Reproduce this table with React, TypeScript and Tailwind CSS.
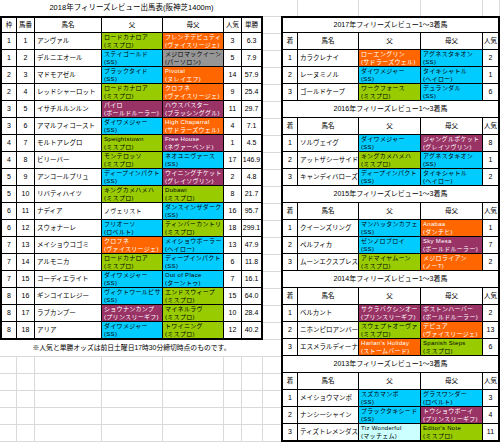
type Tone = "G" | "B" | "O" | "P" | "Y" | "C" | "W";

const tone: Record<Tone, string> = {
  G: "bg-[#99cc00] text-black",
  B: "bg-[#00ccff] text-black",
  O: "bg-[#ff6600] text-white",
  P: "bg-[#993366] text-white",
  Y: "bg-[#969696] text-black",
  C: "bg-[#ccffff] text-black",
  W: "bg-white text-black",
};

type Blood = [string, string, Tone];

const entries: [number, number, string, Blood, Blood, number, string][] = [
  [1, 1, "アンヴァル", ["ロードカナロア", "(ミスプロ)", "G"], ["フレンチデピュティ", "(ヴァイスリージェ)", "O"], 3, "6.3"],
  [1, 2, "デルニエオール", ["ステイゴールド", "(SS)", "B"], ["メジロマックイーン", "(パーソロン)", "Y"], 5, "7.9"],
  [2, 3, "マドモアゼル", ["ブラックタイド", "(SS)", "B"], ["Pivotal", "(ヌレイエフ)", "O"], 14, "57.9"],
  [2, 4, "レッドシャーロット", ["ロードカナロア", "(ミスプロ)", "G"], ["クロフネ", "(ヴァイスリージェ)", "O"], 9, "25.4"],
  [3, 5, "イサチルルンルン", ["パイロ", "(ボールドルーラー)", "P"], ["ハウスバスター", "(ブラッシンググル)", "P"], 11, "29.7"],
  [3, 6, "アマルフィコースト", ["ダイワメジャー", "(SS)", "B"], ["High Chaparral", "(サドラーズウェル)", "O"], 4, "7.1"],
  [4, 7, "モルトアレグロ", ["Speightstown", "(ミスプロ)", "G"], ["Free House", "(ネヴァーベンド)", "P"], 1, "4.5"],
  [4, 8, "ビリーバー", ["モンテロッソ", "(ミスプロ)", "G"], ["ネオユニヴァース", "(SS)", "B"], 17, "146.9"],
  [5, 9, "アンコールプリュ", ["ディープインパクト", "(SS)", "B"], ["ウイニングチケット", "(グレイソヴリン)", "P"], 2, "4.8"],
  [5, 10, "リバティハイツ", ["キングカメハメハ", "(ミスプロ)", "G"], ["Dubawi", "(ミスプロ)", "G"], 8, "21.7"],
  [6, 11, "ナディア", ["ノヴェリスト", "", "W"], ["ダンスインザダーク", "(SS)", "B"], 16, "95.7"],
  [6, 12, "スウォナーレ", ["フリオーソ", "(ロベルト)", "B"], ["ティンバーカントリ", "(ミスプロ)", "G"], 18, "299.1"],
  [7, 13, "メイショウコゴミ", ["クロフネ", "(ヴァイスリージェ)", "O"], ["メイショウボーラー", "(ヘイロー)", "B"], 13, "47.9"],
  [7, 14, "アルモニカ", ["ロードカナロア", "(ミスプロ)", "G"], ["ディープインパクト", "(SS)", "B"], 6, "11.8"],
  [7, 15, "コーディエライト", ["ダイワメジャー", "(SS)", "B"], ["Out of Place", "(ターントゥ)", "B"], 7, "16.1"],
  [8, 16, "ギンコイエレジー", ["ヴィクトワールピサ", "(SS)", "B"], ["エンドスウィープ", "(ミスプロ)", "G"], 15, "64.0"],
  [8, 17, "ラブカンプー", ["ショウナンカンプ", "(プリンスリーギフ)", "P"], ["マイネルラヴ", "(ミスプロ)", "G"], 10, "28.4"],
  [8, 18, "アリア", ["ダイワメジャー", "(SS)", "B"], ["トワイニング", "(ミスプロ)", "G"], 12, "40.2"],
];

const past: { year: number; rows: [number, string, Blood, Blood, number][] }[] = [
  {
    year: 2017,
    rows: [
      [1, "カラクレナイ", ["ローエングリン", "(サドラーズウェル)", "O"], ["アグネスタキオン", "(SS)", "B"], 2],
      [2, "レーヌミノル", ["ダイワメジャー", "(SS)", "B"], ["タイキシャトル", "(ヘイロー)", "B"], 1],
      [3, "ゴールドケープ", ["ワークフォース", "(ミスプロ)", "G"], ["デュランダル", "(SS)", "B"], 6],
    ],
  },
  {
    year: 2016,
    rows: [
      [1, "ソルヴェイグ", ["ダイワメジャー", "(SS)", "B"], ["ジャングルポケット", "(グレイソヴリン)", "P"], 8],
      [2, "アットザシーサイド", ["キングカメハメハ", "(ミスプロ)", "G"], ["アグネスタキオン", "(SS)", "B"], 1],
      [3, "キャンディバローズ", ["ディープインパクト", "(SS)", "B"], ["タイキシャトル", "(ヘイロー)", "B"], 2],
    ],
  },
  {
    year: 2015,
    rows: [
      [1, "クイーンズリング", ["マンハッタンカフェ", "(SS)", "B"], ["Anabaa", "(ダンチヒ)", "O"], 1],
      [2, "ペルフィカ", ["ゼンノロブロイ", "(SS)", "B"], ["Sky Mesa", "(ボールドルーラー)", "P"], 7],
      [3, "ムーンエクスプレス", ["アドマイヤムーン", "(ミスプロ)", "G"], ["メジロライアン", "(ノーT)", "O"], 2],
    ],
  },
  {
    year: 2014,
    rows: [
      [1, "ベルカント", ["サクラバクシンオー", "(プリンスリーギフ)", "P"], ["ボストンハーバー", "(ボールドルーラー)", "P"], 2],
      [2, "ニホンピロアンバー", ["スウェプトオーヴァ", "(ミスプロ)", "G"], ["デピュア", "(ヴァイスリージェ)", "O"], 13],
      [3, "エスメラルディーナ", ["Harlan's Holiday", "(ストームバード)", "O"], ["Spanish Steps", "(ミスプロ)", "G"], 6],
    ],
  },
  {
    year: 2013,
    rows: [
      [1, "メイショウマンボ", ["スズカマンボ", "(SS)", "B"], ["グラスワンダー", "(ロベルト)", "B"], 3],
      [2, "ナンシーシャイン", ["ブラックタキシード", "(SS)", "B"], ["トウショウボーイ", "(プリンスリーギフ)", "P"], 4],
      [3, "ティズトレメンダス", ["Tiz Wonderful", "(マッチェム)", "C"], ["Editor's Note", "(ミスプロ)", "G"], 11],
    ],
  },
];

const leftCols = "grid grid-cols-[15px_18px_67px_61px_61px_18px_19px]";
const rightCols = "grid grid-cols-[15px_61px_62px_62px_15px]";

function BloodCell({ b }: { b: Blood }) {
  const [name, line, t] = b;
  return (
    <div className={`${tone[t]} flex flex-col justify-center overflow-hidden whitespace-nowrap border-r border-black pl-[2px] text-[6px] leading-[8px] tracking-[0.3px]`}>
      <span>{name}</span>
      {line && <span>{line}</span>}
    </div>
  );
}

function Num({ v, last }: { v: string | number; last?: boolean }) {
  return (
    <div className={`flex items-center justify-center text-[7px] ${last ? "" : "border-r border-black"}`}>{v}</div>
  );
}

function Head({ label, last }: { label: string; last?: boolean }) {
  return (
    <div className={`flex items-center justify-center text-[6.5px] ${last ? "" : "border-r border-black"}`}>{label}</div>
  );
}

function GridRow({ widths, h = "h-[17px]" }: { widths: string[]; h?: string }) {
  return (
    <div className={`flex ${h} border-b border-[#d9d9d9]`}>
      {widths.map((w, i) => (
        <div key={i} className={`${w} shrink-0 border-r border-[#d9d9d9]`} />
      ))}
    </div>
  );
}

export default function App() {
  const leftWidths = ["w-[17px]", "w-[18px]", "w-[67px]", "w-[61px]", "w-[61px]", "w-[18px]", "w-[21px]"];
  const rightWidths = ["w-[17px]", "w-[61px]", "w-[62px]", "w-[62px]", "w-[17px]"];

  return (
    <div className="flex h-[442px] w-[500px] overflow-hidden bg-white text-black font-['Liberation_Sans','Noto_Sans_CJK_JP',sans-serif]">
      {/* left: 2018 entries */}
      <div className="flex w-[263px] shrink-0 flex-col">
        <div className="flex h-[16px] items-center justify-center text-[7.5px]">
          2018年フィリーズレビュー出馬表(阪神芝1400m)
        </div>
        <div className="border-2 border-black">
          <div className={`${leftCols} h-[15px] border-b border-black`}>
            <Head label="枠" />
            <Head label="馬番" />
            <Head label="馬名" />
            <Head label="父" />
            <Head label="母父" />
            <Head label="人気" />
            <Head label="単勝" last />
          </div>
          {entries.map(([waku, ban, name, sire, dam, pop, odds], i) => (
            <div
              key={ban}
              className={`${leftCols} ${i === entries.length - 1 ? "h-[16px]" : "h-[17px] border-b border-black"}`}
            >
              <Num v={waku} />
              <Num v={ban} />
              <div className="flex items-center overflow-hidden whitespace-nowrap border-r border-black pl-[2px] text-[6.5px]">
                {name}
              </div>
              <BloodCell b={sire} />
              <BloodCell b={dam} />
              <Num v={pop} />
              <Num v={odds} last />
            </div>
          ))}
        </div>
        <div className="flex h-[17px] items-center justify-center border-b border-[#d9d9d9] text-[6.8px]">
          ※人気と単勝オッズは前日土曜日17時30分締切時点のものです。
        </div>
        {[0, 1, 2, 3, 4].map((k) => (
          <GridRow key={k} widths={leftWidths} />
        ))}
      </div>

      {/* gap column */}
      <div className="flex w-[18px] shrink-0 flex-col">
        {Array.from({ length: 26 }).map((_, k) => (
          <div key={k} className="h-[17px] shrink-0 border-b border-[#d9d9d9]" />
        ))}
      </div>

      {/* right: past results */}
      <div className="flex w-[219px] shrink-0 flex-col">
        <div className="flex h-[16px]">
          {rightWidths.map((w, i) => (
            <div key={i} className={`${w} shrink-0 border-r border-[#d9d9d9]`} />
          ))}
        </div>
        <div className="border-2 border-black">
          {past.map((blk, bi) => (
            <div key={blk.year}>
              <div
                className={`flex items-center justify-center border-b border-black text-[7px] ${bi === 0 ? "h-[15px]" : "h-[17px]"}`}
              >
                {blk.year}年フィリーズレビュー1～3着馬
              </div>
              <div className={`${rightCols} h-[17px] border-b border-black`}>
                <Head label="着" />
                <Head label="馬名" />
                <Head label="父" />
                <Head label="母父" />
                <Head label="人気" last />
              </div>
              {blk.rows.map(([rank, name, sire, dam, pop], ri) => {
                const last = bi === past.length - 1 && ri === blk.rows.length - 1;
                return (
                  <div key={rank} className={`${rightCols} ${last ? "h-[16px]" : "h-[17px] border-b border-black"}`}>
                    <Num v={rank} />
                    <div className="flex items-center overflow-hidden whitespace-nowrap border-r border-black pl-[2px] text-[6.5px]">
                      {name}
                    </div>
                    <BloodCell b={sire} />
                    <BloodCell b={dam} />
                    <Num v={pop} last />
                  </div>
                );
              })}
            </div>
          ))}
        </div>
      </div>
    </div>
  );
}
